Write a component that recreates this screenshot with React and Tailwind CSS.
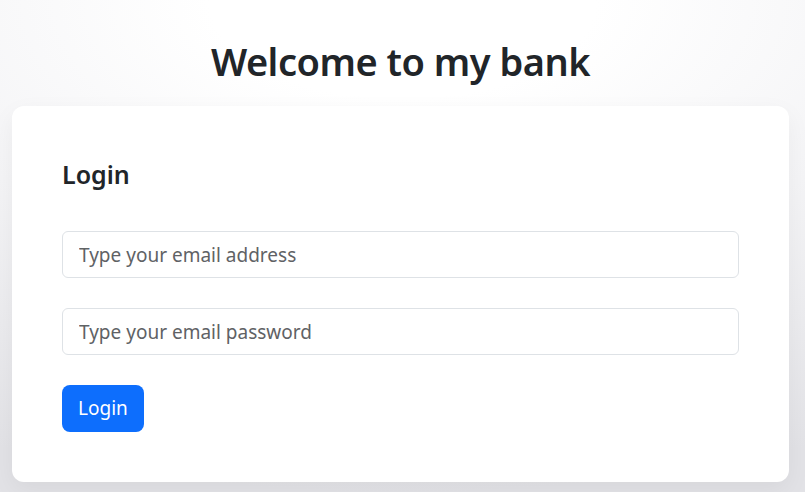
import React, { useState } from "react";

export default function App() {
  const [email, setEmail] = useState("");
  const [password, setPassword] = useState("");

  return (
    <div
      className="min-h-screen w-full bg-[radial-gradient(ellipse_120%_100%_at_50%_0%,#ffffff_20%,#f4f4f6_55%,#e2e2e6_100%)] pt-[32px] pl-3 pr-4 text-[#212529]"
      style={{ fontFamily: '"Noto Sans", "Open Sans", sans-serif' }}
    >
      <h1 className="mb-[16px] text-center text-[38px] font-semibold leading-[58px] tracking-[-0.5px]">
        Welcome to my bank
      </h1>

      <div className="rounded-xl bg-white px-[50px] pt-[50px] pb-[50px] shadow-[0_8px_24px_rgba(0,0,0,0.05)]">
        <h2 className="mb-[39px] text-[25px] font-semibold leading-[36px]">Login</h2>

        <form onSubmit={(e) => e.preventDefault()} className="flex flex-col gap-[30px]">
          <input
            type="email"
            value={email}
            onChange={(e) => setEmail(e.target.value)}
            placeholder="Type your email address"
            className="h-[47px] w-full rounded-md border border-[#dee2e6] px-4 text-[19px] text-[#212529] outline-none placeholder:text-[#5f6265]"
          />
          <input
            type="password"
            value={password}
            onChange={(e) => setPassword(e.target.value)}
            placeholder="Type your email password"
            className="h-[47px] w-full rounded-md border border-[#dee2e6] px-4 text-[19px] text-[#212529] outline-none placeholder:text-[#5f6265]"
          />
          <div>
            <button
              type="submit"
              className="h-[47px] rounded-lg bg-[#0d6efd] px-4 text-[19px] text-white"
            >
              Login
            </button>
          </div>
        </form>
      </div>
    </div>
  );
}
